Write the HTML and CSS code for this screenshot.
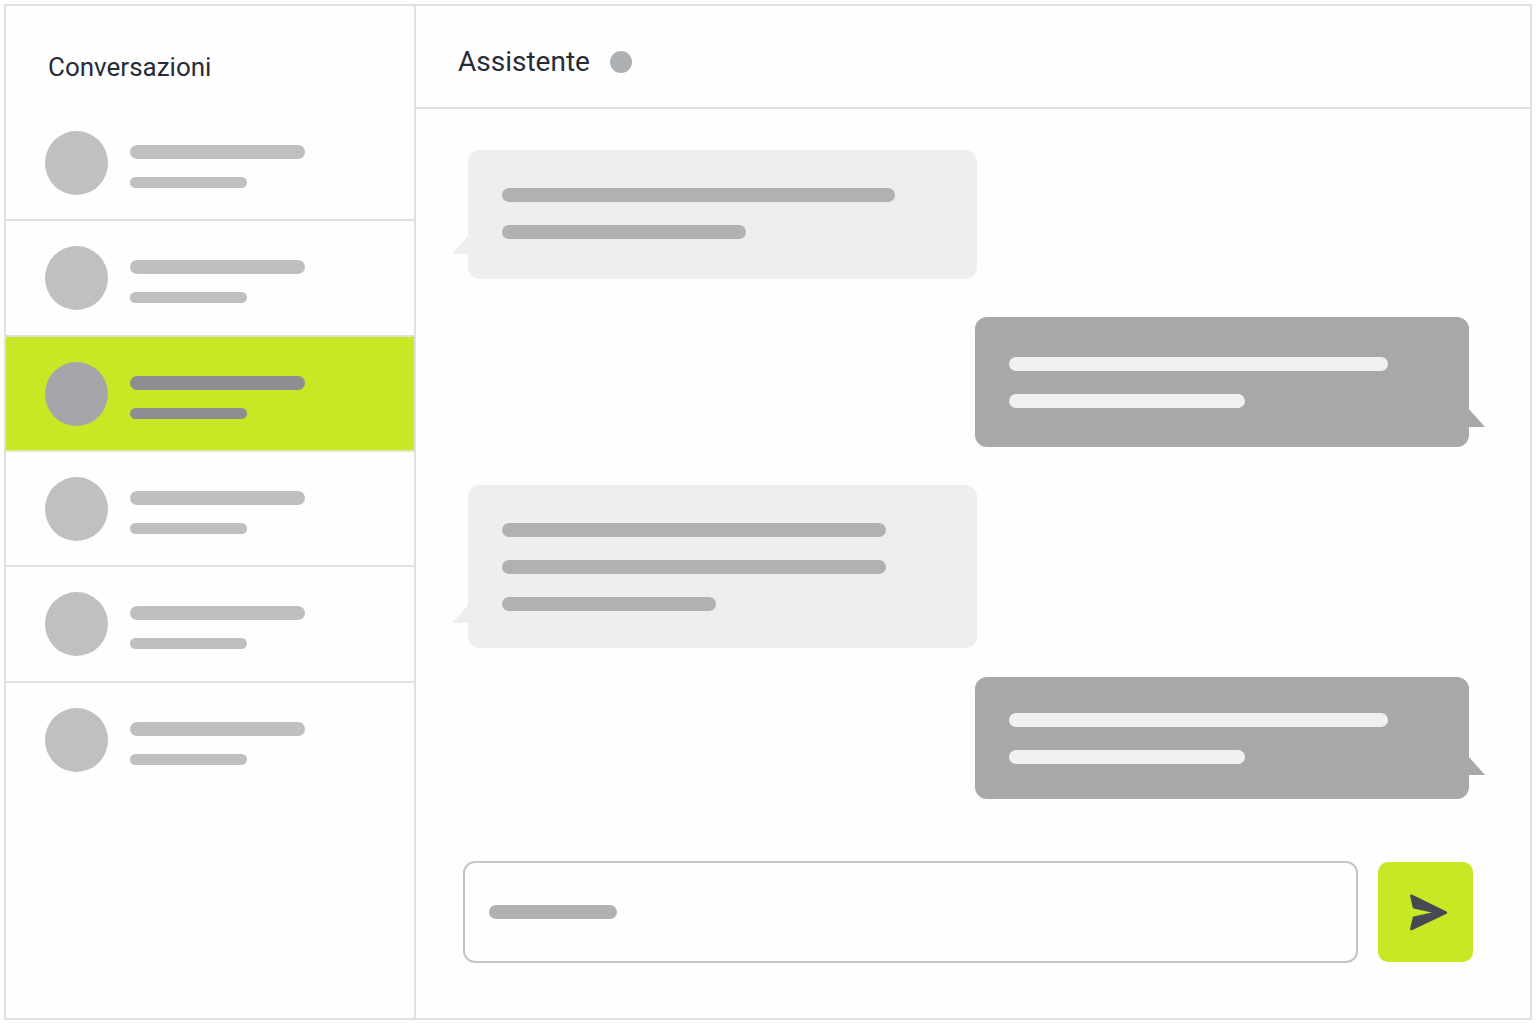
FILE: index.html
```html
<!DOCTYPE html>
<html lang="it">
<head>
  <meta charset="utf-8">
  <meta name="viewport" content="width=device-width, initial-scale=1">
  <title>Assistente</title>
  <link rel="stylesheet" href="styles.css">
</head>
<body>
  <div class="app">
    <aside class="sidebar">
      <h2 class="sidebar-title">Conversazioni</h2>
      <ul class="conversations">
        <li class="conversation"><span class="avatar"></span><span class="summary"><span class="bar name"></span><span class="bar preview"></span></span></li>
        <li class="conversation"><span class="avatar"></span><span class="summary"><span class="bar name"></span><span class="bar preview"></span></span></li>
        <li class="conversation active"><span class="avatar"></span><span class="summary"><span class="bar name"></span><span class="bar preview"></span></span></li>
        <li class="conversation"><span class="avatar"></span><span class="summary"><span class="bar name"></span><span class="bar preview"></span></span></li>
        <li class="conversation"><span class="avatar"></span><span class="summary"><span class="bar name"></span><span class="bar preview"></span></span></li>
        <li class="conversation"><span class="avatar"></span><span class="summary"><span class="bar name"></span><span class="bar preview"></span></span></li>
      </ul>
    </aside>

    <main class="chat">
      <header class="chat-header">
        <h1 class="chat-title">Assistente</h1>
        <span class="status"></span>
      </header>

      <div class="messages">
        <div class="bubble received"><span class="bar line-full"></span><span class="bar line-half"></span></div>
        <div class="bubble sent"><span class="bar line-long"></span><span class="bar line-half"></span></div>
        <div class="bubble received tall"><span class="bar line-long"></span><span class="bar line-long"></span><span class="bar line-short"></span></div>
        <div class="bubble sent compact"><span class="bar line-long"></span><span class="bar line-half"></span></div>
      </div>

      <form class="composer">
        <div class="field">
          <input class="field-input" type="text" aria-label="Messaggio">
          <span class="bar field-hint"></span>
        </div>
        <button class="send" type="button" aria-label="Invia">
          <svg class="send-icon" viewBox="0 0 40 38" aria-hidden="true">
            <path d="M3.300 2.600 L38 19.500 L3.300 36 L5.900 24.800 L29.500 19.500 L5.900 14.200 Z" fill="#454b54" stroke="#454b54" stroke-width="2.500" stroke-linejoin="round"/>
          </svg>
        </button>
      </form>
    </main>
  </div>
</body>
</html>
```
FILE: styles.css
```css
* {
  box-sizing: border-box;
}

body {
  display: flex;
  min-height: 100vh;
  margin: 0;
  padding: 4px;
  background: #fefefe;
  color: #262c38;
  font-family: Roboto, "Liberation Sans", sans-serif;
}

.app {
  display: flex;
  flex: 1;
  border: 2px solid #e0e0e0;
}

.bar {
  display: block;
  max-width: 100%;
  height: 14px;
  border-radius: 7px;
  background: #afb1b2;
}

/* Sidebar */
.sidebar {
  flex: 0 0 410px;
  border-right: 2px solid #e0e0e0;
}

.sidebar-title {
  margin: 0;
  padding: 45px 42px 23px;
  font-size: 26px;
  font-weight: 400;
  line-height: 32px;
}

.conversations {
  display: grid;
  grid-template-rows: repeat(6, 1fr);
  height: 692px;
  margin: 0;
  padding: 0;
  list-style: none;
}

.conversation {
  display: flex;
  gap: 22px;
  padding: 25px 39px 0;
  border-bottom: 2px solid #e0e0e0;
}

.conversation:last-child {
  border-bottom: 0;
}

.conversation.active {
  background: #c8e825;
  border-bottom-color: #e0e8b8;
}

.avatar {
  width: 63px;
  height: 64px;
  border-radius: 50%;
  background: #c0c0c2;
}

.summary {
  display: flex;
  flex-direction: column;
  gap: 18px;
  padding-top: 14px;
}

.name {
  width: 175px;
  background: #bfbfc1;
}

.preview {
  width: 117px;
  height: 11px;
  background: #bfbfc1;
}

.active .avatar {
  background: #a5a6a9;
}

.active .bar {
  background: #8d8e92;
}

/* Chat */
.chat {
  display: flex;
  flex: 1;
  flex-direction: column;
  min-width: 0;
}

.chat-header {
  display: flex;
  align-items: center;
  gap: 20px;
  height: 103px;
  padding: 10px 42px 0;
  border-bottom: 2px solid #e0e0e0;
}

.chat-title {
  margin: 0;
  font-size: 28px;
  font-weight: 400;
  line-height: 34px;
}

.status {
  width: 22px;
  height: 22px;
  border-radius: 50%;
  background: #adb0b2;
}

.messages {
  display: flex;
  flex-direction: column;
  padding: 41px 61px 40px 52px;
}

.bubble {
  position: relative;
  display: flex;
  flex-direction: column;
  gap: 23px;
  width: 100%;
  padding: 38px 34px 40px;
  border-radius: 12px;
}

.bubble + .bubble {
  margin-top: 38px;
}

.bubble::after {
  content: "";
  position: absolute;
  bottom: 25px;
  width: 16px;
  height: 18px;
  background: inherit;
}

.received {
  max-width: 509px;
  background: #eeeeee;
}

.received::after {
  right: 100%;
  clip-path: polygon(100% 0, 100% 100%, 0 100%);
}

.tall {
  padding-bottom: 37px;
}

.sent {
  align-self: flex-end;
  max-width: 494px;
  padding-block: 40px 39px;
  background: #a6a8aa;
}

.sent::after {
  bottom: 20px;
  left: 100%;
  clip-path: polygon(0 0, 100% 100%, 0 100%);
}

.sent .bar {
  background: #f0f0f0;
}

.bubble + .compact {
  margin-top: 29px;
  padding-block: 36px 35px;
}

.compact::after {
  bottom: 24px;
}

.line-full {
  width: 393px;
}

.line-long {
  width: 384px;
}

.line-half {
  width: 244px;
}

.line-short {
  width: 214px;
}

.sent .line-long {
  width: 379px;
}

.sent .line-half {
  width: 236px;
}

/* Composer */
.composer {
  display: flex;
  align-items: center;
  gap: 20px;
  margin-top: auto;
  padding: 0 57px 55px 47px;
}

.field {
  display: grid;
  flex: 1;
  align-items: center;
}

.field-input,
.field-hint {
  grid-area: 1 / 1;
}

.field-input {
  width: 100%;
  height: 102px;
  padding: 0 26px;
  border: 2px solid #c4c5c6;
  border-radius: 12px;
  background: #fefefe;
  color: inherit;
  font: inherit;
  font-size: 26px;
}

.field-hint {
  width: 128px;
  margin-left: 26px;
  pointer-events: none;
}

.send {
  display: flex;
  align-items: center;
  justify-content: center;
  width: 95px;
  height: 100px;
  padding: 0 0 0 5px;
  border: 0;
  border-radius: 10px;
  background: #c8e825;
}

.send-icon {
  width: 40px;
  height: 38px;
}
```
